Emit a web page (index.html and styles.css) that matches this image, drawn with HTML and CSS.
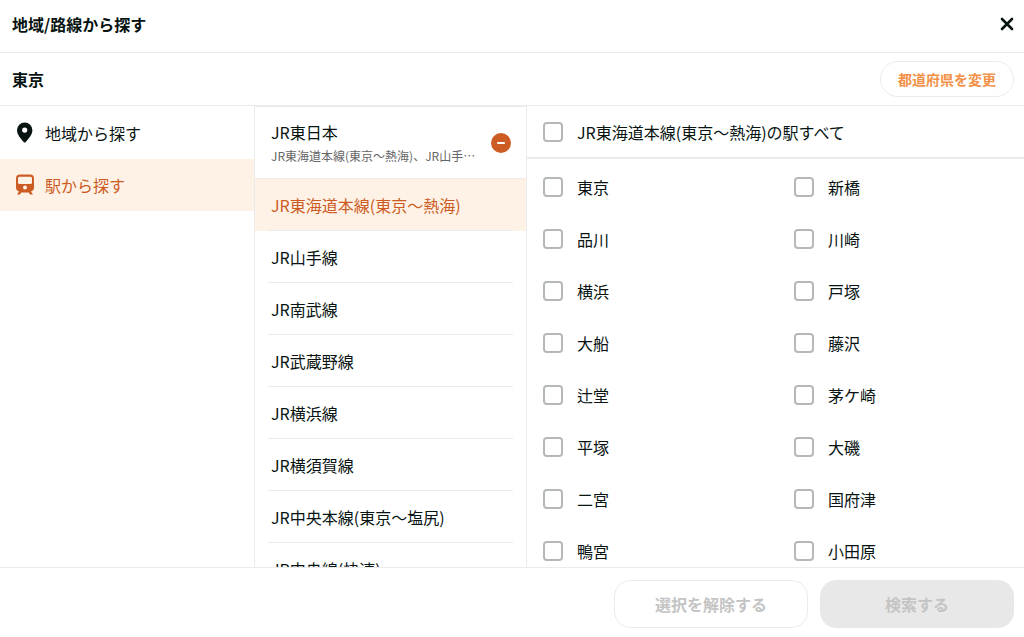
FILE: index.html
```html
<!DOCTYPE html>
<html lang="ja">
<head>
<meta charset="utf-8">
<meta name="viewport" content="width=device-width, initial-scale=1">
<title>地域/路線から探す</title>
<link rel="stylesheet" href="styles.css">
</head>
<body>
<div class="dialog">
  <header class="bar bar-top">
    <h1 class="bar-title">地域/路線から探す</h1>
    <button class="close" type="button" aria-label="閉じる">
      <svg width="14" height="14" viewBox="0 0 14 14"><path d="M2 2l10 10M12 2L2 12" fill="none" stroke="currentColor" stroke-width="2.6" stroke-linecap="round"/></svg>
    </button>
  </header>
  <div class="bar">
    <h2 class="bar-title">東京</h2>
    <button class="change" type="button">都道府県を変更</button>
  </div>
  <main class="panes">
    <nav class="modes">
      <a class="mode" href="#area">
        <svg class="mode-icon" width="20" height="22" viewBox="0 0 20 22"><path fill="currentColor" fill-rule="evenodd" d="M9.700 0.500A7.700 7.700 0 0 0 2 8.200C2 13 6.500 17.200 8.700 20a1.300 1.300 0 0 0 2 0C12.900 17.200 17.400 13 17.400 8.200A7.700 7.700 0 0 0 9.700 .5zm0 5a2.600 2.600 0 1 1 0 5.200 2.600 2.600 0 0 1 0-5.200z"/></svg>
        地域から探す
      </a>
      <a class="mode mode-active" href="#station">
        <svg class="mode-icon" width="20" height="22" viewBox="0 0 20 22"><path fill="currentColor" fill-rule="evenodd" d="M5 .5h10a4 4 0 0 1 4 4v9a4 4 0 0 1-3 3.900l2 3.100h-3l-1.200-2H6.200l-1.200 2H2l2-3.100A4 4 0 0 1 1 13.500v-9a4 4 0 0 1 4-4zM4.500 2.800A1.500 1.500 0 0 0 3 4.300v4.200A1.500 1.500 0 0 0 4.500 10h11A1.500 1.500 0 0 0 17 8.500V4.300a1.500 1.500 0 0 0-1.500-1.500zM10 11.500a2 2 0 1 0 0 4 2 2 0 0 0 0-4z"/></svg>
        駅から探す
      </a>
    </nav>
    <section class="lines">
      <button class="company" type="button">
        <span class="company-text">
          <span class="company-name">JR東日本</span>
          <span class="company-lines">JR東海道本線(東京～熱海)、JR山手線、JR南武線</span>
        </span>
        <svg class="collapse" width="20" height="20" viewBox="0 0 20 20"><circle cx="10" cy="10" r="10" fill="#cc5c24"/><path d="M7 10h6" stroke="#fff" stroke-width="2" stroke-linecap="round"/></svg>
      </button>
      <ul class="line-list">
        <li class="line line-active"><a class="line-link" href="#tokaido">JR東海道本線(東京～熱海)</a></li>
        <li class="line"><a class="line-link" href="#yamanote">JR山手線</a></li>
        <li class="line"><a class="line-link" href="#nambu">JR南武線</a></li>
        <li class="line"><a class="line-link" href="#musashino">JR武蔵野線</a></li>
        <li class="line"><a class="line-link" href="#yokohama">JR横浜線</a></li>
        <li class="line"><a class="line-link" href="#yokosuka">JR横須賀線</a></li>
        <li class="line"><a class="line-link" href="#chuo">JR中央本線(東京～塩尻)</a></li>
        <li class="line"><a class="line-link" href="#chuo-rapid">JR中央線(快速)</a></li>
      </ul>
    </section>
    <section class="stations">
      <label class="check check-all"><input class="box" type="checkbox">JR東海道本線(東京～熱海)の駅すべて</label>
      <div class="station-grid">
        <label class="check"><input class="box" type="checkbox">東京</label>
        <label class="check"><input class="box" type="checkbox">新橋</label>
        <label class="check"><input class="box" type="checkbox">品川</label>
        <label class="check"><input class="box" type="checkbox">川崎</label>
        <label class="check"><input class="box" type="checkbox">横浜</label>
        <label class="check"><input class="box" type="checkbox">戸塚</label>
        <label class="check"><input class="box" type="checkbox">大船</label>
        <label class="check"><input class="box" type="checkbox">藤沢</label>
        <label class="check"><input class="box" type="checkbox">辻堂</label>
        <label class="check"><input class="box" type="checkbox">茅ケ崎</label>
        <label class="check"><input class="box" type="checkbox">平塚</label>
        <label class="check"><input class="box" type="checkbox">大磯</label>
        <label class="check"><input class="box" type="checkbox">二宮</label>
        <label class="check"><input class="box" type="checkbox">国府津</label>
        <label class="check"><input class="box" type="checkbox">鴨宮</label>
        <label class="check"><input class="box" type="checkbox">小田原</label>
      </div>
    </section>
  </main>
  <footer class="actions">
    <button class="action action-clear" type="button" disabled>選択を解除する</button>
    <button class="action action-search" type="button" disabled>検索する</button>
  </footer>
</div>
</body>
</html>
```
FILE: styles.css
```css
* {
  box-sizing: border-box;
}

body {
  margin: 0;
  background: #fff;
  color: #081412;
  font: 16px/24px "Noto Sans CJK JP", sans-serif;
}

button {
  font: inherit;
  color: inherit;
  cursor: pointer;
}

a {
  color: inherit;
  text-decoration: none;
}

.dialog {
  display: flex;
  flex-direction: column;
  height: 100vh;
}

.bar {
  display: flex;
  flex: none;
  align-items: center;
  justify-content: space-between;
  min-height: 53px;
  padding: 0 10px 0 12px;
  border-bottom: 1px solid #ebebeb;
}

.bar-top {
  padding-bottom: 4px;
}

.bar-title {
  margin: 0;
  font-size: 16px;
  font-weight: 700;
}

.close {
  display: flex;
  padding: 0;
  border: 0;
  background: none;
}

.change {
  height: 36px;
  padding: 0 17px;
  border: 1px solid #ebebeb;
  border-radius: 18px;
  background: #fff;
  color: #f29147;
  font-size: 14px;
  font-weight: 700;
}

.panes {
  display: grid;
  flex: 1;
  grid-template-columns: 254px 273px 1fr;
  min-height: 0;
}

.mode {
  display: flex;
  align-items: center;
  gap: 10px;
  height: 52px;
  padding-left: 15px;
}

.mode:first-child {
  height: 53px;
}

.mode-active {
  background: #fef2e6;
  color: #cc5c24;
}

.lines {
  overflow: hidden;
  border: 1px solid #ebebeb;
  border-bottom: 0;
}

.company {
  display: flex;
  align-items: center;
  justify-content: space-between;
  width: 100%;
  height: 71px;
  padding: 0 15px 0 16px;
  border: 0;
  background: none;
  text-align: left;
}

.company-text {
  width: 210px;
}

.company-name {
  display: block;
  line-height: 26px;
}

.company-lines {
  display: block;
  overflow: hidden;
  color: #666;
  font-size: 12px;
  line-height: 22px;
  text-overflow: ellipsis;
  white-space: nowrap;
}

.line-list {
  margin: 0;
  padding: 0;
  border-top: 1px solid #f3ece6;
  list-style: none;
}

.line {
  padding: 0 13px;
}

.line-active {
  background: #fef2e6;
  color: #cc5c24;
}

.line-link {
  display: flex;
  align-items: center;
  height: 52px;
  padding: 0 3px;
  border-bottom: 1px solid #ebebeb;
}

.stations {
  overflow: hidden;
}

.check {
  display: flex;
  align-items: center;
  gap: 14px;
  height: 52px;
}

.check-all {
  height: 53px;
  padding-left: 16px;
  border-bottom: 2px solid #ebebeb;
}

.station-grid {
  display: grid;
  grid-template-columns: 1fr 1fr;
  column-gap: 21px;
  padding: 2px 0 0 16px;
}

.box {
  flex: none;
  width: 20px;
  height: 20px;
  margin: 0;
  border: 2px solid #b4b9b8;
  border-radius: 4px;
  background: #fff;
  appearance: none;
}

.box:checked {
  border-color: #cc5c24;
  background: #cc5c24;
}

.actions {
  display: flex;
  flex: none;
  justify-content: flex-end;
  gap: 12px;
  padding: 12px 10px 9px;
  border-top: 1px solid #ebebeb;
}

.action {
  width: 194px;
  height: 48px;
  border: 1px solid #ebebeb;
  border-radius: 16px;
  background: #fff;
  color: #c4c4c4;
  font-weight: 700;
}

.action-search {
  border-color: #e8e8e8;
  background: #e8e8e8;
}
```
